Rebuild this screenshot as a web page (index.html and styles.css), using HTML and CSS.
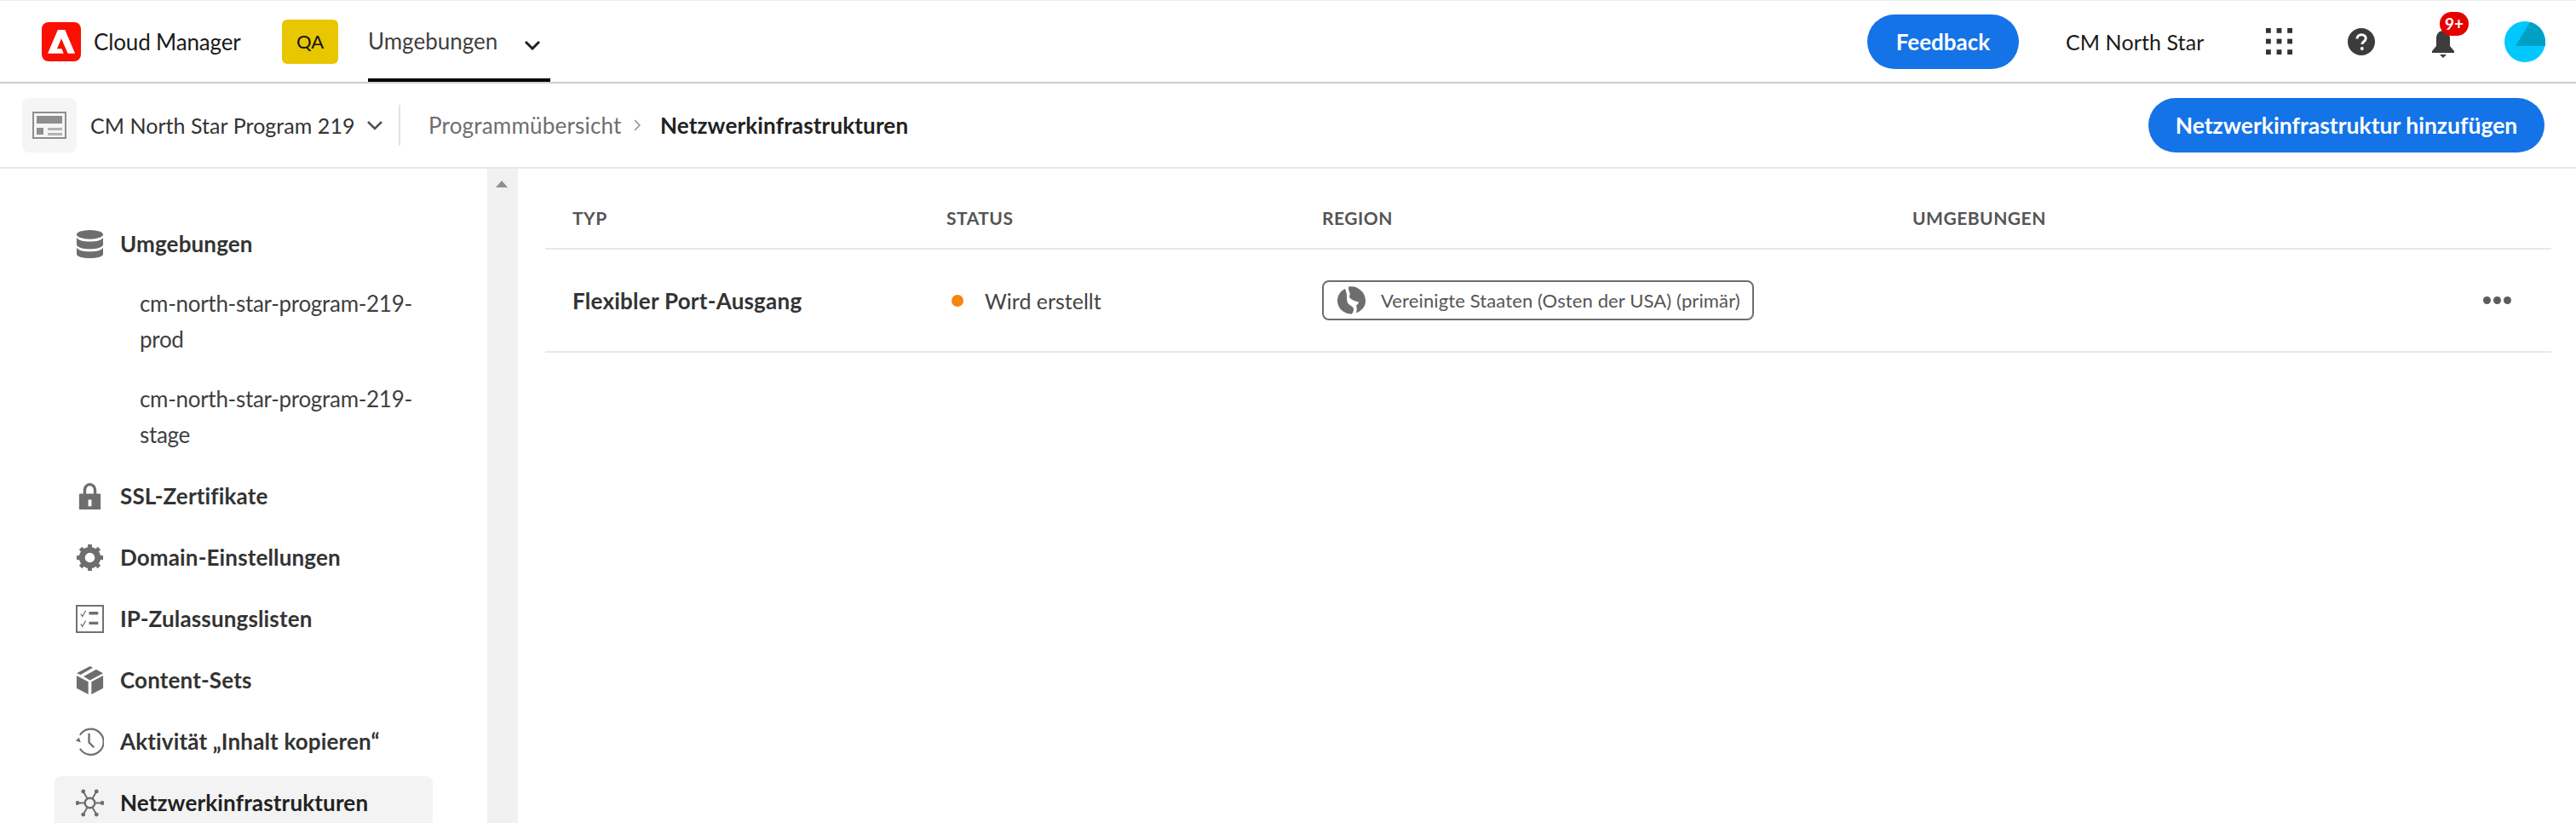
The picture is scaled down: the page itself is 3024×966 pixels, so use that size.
FILE: index.html
```html
<!DOCTYPE html>
<html lang="de">
<head>
    <meta charset="UTF-8">
    <title>Cloud Manager</title>
    <link rel="stylesheet" href="styles.css">
</head>
<body>
    <!-- Obere Leiste -->
    <header class="topbar">
        <svg class="logo" viewBox="0 0 46 46"><rect width="46" height="46" rx="8" fill="#fa0f00"/><path transform="translate(7 9) scale(1.07)" fill="#fff" d="M11.1 0H19L30 26H22.1L15 9.6 10.2 20.8H15.4L17.5 26H0z"/></svg>
        <span class="app-name">Cloud Manager</span>
        <span class="env-badge">QA</span>
        <div class="top-tab">
            <span>Umgebungen</span>
            <svg class="tab-chevron" viewBox="0 0 20 12"><path d="M2 2l8 8 8-8" fill="none" stroke="#222" stroke-width="3"/></svg>
        </div>
        <div class="top-right">
            <button class="btn btn-feedback">Feedback</button>
            <span class="org-name">CM North Star</span>
            <svg class="icon-apps" viewBox="0 0 32 32" fill="#333"><rect x="0" y="0" width="6" height="6"/><rect x="13" y="0" width="6" height="6"/><rect x="26" y="0" width="6" height="6"/><rect x="0" y="13" width="6" height="6"/><rect x="13" y="13" width="6" height="6"/><rect x="26" y="13" width="6" height="6"/><rect x="0" y="26" width="6" height="6"/><rect x="13" y="26" width="6" height="6"/><rect x="26" y="26" width="6" height="6"/></svg>
            <svg class="icon-help" viewBox="0 0 32 32"><circle cx="16" cy="16" r="16" fill="#3c3c3c"/><path d="M11 12.5c0-3 2.300-4.700 5.200-4.700 2.900 0 5 1.700 5 4.200 0 3.800-4.200 3.700-4.200 7" fill="none" stroke="#fff" stroke-width="3"/><circle cx="16.800" cy="24" r="2" fill="#fff"/></svg>
            <div class="bell">
                <svg class="icon-bell" viewBox="0 0 30 34" fill="#3c3c3c"><path d="M15 2c-5 0-8 4-8 9v9l-5 6v2h26v-2l-5-6v-9c0-5-3-9-8-9z"/><path d="M11 30h8l-4 4z"/></svg>
                <span class="bell-count">9+</span>
            </div>
            <svg class="avatar" viewBox="0 0 48 48"><circle cx="24" cy="24" r="24" fill="#00c8ff"/><path d="M30 1A24 24 0 0 1 48 24v5H13z" fill="#00a0c4"/></svg>
        </div>
    </header>

    <!-- Programmleiste -->
    <div class="subbar">
        <div class="program-tile">
            <svg viewBox="0 0 40 32" width="40" height="32"><rect x="1" y="1" width="38" height="30" fill="none" stroke="#8e8e8e" stroke-width="2"/><rect x="5" y="5" width="30" height="9" fill="#8e8e8e"/><rect x="5" y="19" width="8" height="8" fill="#8e8e8e"/><rect x="18" y="19" width="17" height="3" fill="#b3b3b3"/><rect x="18" y="25" width="17" height="3" fill="#b3b3b3"/></svg>
        </div>
        <span class="program-name">CM North Star Program 219</span>
        <svg class="program-chevron" viewBox="0 0 20 12"><path d="M2 2l8 8 8-8" fill="none" stroke="#505050" stroke-width="2.500"/></svg>
        <div class="subbar-divider"></div>
        <nav class="breadcrumb">
            <span class="crumb">Programmübersicht</span>
            <svg class="crumb-sep" viewBox="0 0 8 14"><path d="M1 1l6 6-6 6" fill="none" stroke="#8e8e8e" stroke-width="1.500"/></svg>
            <span class="crumb-current">Netzwerkinfrastrukturen</span>
        </nav>
        <button class="btn btn-add">Netzwerkinfrastruktur hinzufügen</button>
    </div>

    <div class="main">
        <!-- Seitenleiste -->
        <aside class="sidebar">
            <div class="nav-item">
                <svg class="nav-icon" viewBox="0 0 34 34" fill="#6e6e6e"><ellipse cx="17" cy="5.500" rx="16" ry="5.500"/><path d="M1 9c2 3.500 8 5 16 5s14-1.500 16-5v9c-2 3.500-8 5-16 5S3 21.500 1 18z"/><path d="M1 21c2 3.500 8 5 16 5s14-1.500 16-5v8c0 3-7 5-16 5S1 32 1 29z"/></svg>
                <span>Umgebungen</span>
            </div>
            <div class="sub-list">
                <div class="sub-item">cm-north-star-program-219-<br>prod</div>
                <div class="sub-item">cm-north-star-program-219-<br>stage</div>
            </div>
            <div class="nav-item">
                <svg class="nav-icon" viewBox="0 0 34 34" fill="#6e6e6e"><path d="M9 15V10c0-5 3.500-9 8-9s8 4 8 9v5h-3.500v-5c0-3.500-2-5.500-4.500-5.500S12.500 6.500 12.500 10v5z"/><path d="M5 14h24a1 1 0 0 1 1 1v18H4V15a1 1 0 0 1 1-1zm10 7v8h4v-8z" fill-rule="evenodd"/></svg>
                <span>SSL-Zertifikate</span>
            </div>
            <div class="nav-item">
                <svg class="nav-icon" viewBox="0 0 34 34"><circle cx="17" cy="17" r="9.500" fill="none" stroke="#6e6e6e" stroke-width="7"/><path d="M17 1v32M1 17h32M5.700 5.700l22.600 22.600M28.300 5.700L5.700 28.300" stroke="#6e6e6e" stroke-width="5" stroke-dasharray="6 20 6" fill="none"/></svg>
                <span>Domain-Einstellungen</span>
            </div>
            <div class="nav-item">
                <svg class="nav-icon" viewBox="0 0 34 34" fill="none" stroke="#6e6e6e"><rect x="1" y="1" width="32" height="32" stroke-width="2"/><path d="M6 11l2 3 4-7M6 23l2 3 4-7" stroke-width="1.300"/><path d="M16 10h11M16 22h11" stroke-width="3.500"/></svg>
                <span>IP-Zulassungslisten</span>
            </div>
            <div class="nav-item">
                <svg class="nav-icon" viewBox="0 0 34 36" fill="#6e6e6e"><path d="M0 9L17 0l4 2L5 11v0zM9 13L25 4l9 5-17 9z"/><path d="M0 12l15 8v16L0 28zM34 12v16l-15 8V20z"/></svg>
                <span>Content-Sets</span>
            </div>
            <div class="nav-item">
                <svg class="nav-icon" viewBox="0 0 34 34" fill="none" stroke="#6e6e6e" stroke-width="2.200"><path d="M5 9a15.500 15.500 0 1 1 0 16.500"/><path d="M16 7v11l6 6" stroke-width="2.400"/><path d="M0 16l4-4 2 6z" fill="#6e6e6e" stroke="none"/></svg>
                <span>Aktivität „Inhalt kopieren“</span>
            </div>
            <div class="nav-item nav-item-active">
                <svg class="nav-icon" viewBox="0 0 34 34" fill="#6e6e6e" stroke="#6e6e6e" stroke-width="2"><path d="M1.500 17h31M9 3l16 28M25 3L9 31"/><circle cx="17" cy="17" r="6" fill="#f3f3f3" stroke-width="2.500"/><circle cx="2" cy="17" r="1.500"/><circle cx="32" cy="17" r="1.500"/><circle cx="9" cy="3" r="1.500"/><circle cx="25" cy="3" r="1.500"/><circle cx="9" cy="31" r="1.500"/><circle cx="25" cy="31" r="1.500"/></svg>
                <span>Netzwerkinfrastrukturen</span>
            </div>
        </aside>

        <div class="scrollbar"><div class="scroll-arrow"></div></div>

        <!-- Tabelle -->
        <section class="content">
            <div class="table-row table-head">
                <div>TYP</div>
                <div>STATUS</div>
                <div>REGION</div>
                <div>UMGEBUNGEN</div>
            </div>
            <div class="table-row table-body">
                <div class="cell-type">Flexibler Port-Ausgang</div>
                <div class="cell-status"><span class="status-dot"></span>Wird erstellt</div>
                <div>
                    <span class="region-tag">
                        <svg class="globe" viewBox="0 0 33 33" fill="#6e6e6e"><path d="M9 3C3 6 0 11 0 17c0 7 5 13 12 15 2 .5 4 .5 5 .5 2-3 3-6 1-8-2-2-5-3-6-5-1-3-1-5-1-8 0-3-1-6-2-8.500z"/><path d="M13 .500c5-1 10 0 14 4 4 3 6 8 6 13 0 6-4 11-11 14 1-4 1-7 0-9 1-1 3-2 3-4-2-1-5-1-8-3-2-1-3-2-3-4 1-2 1-3 0-5-1-2-1-4-1-6z"/></svg>
                        Vereinigte Staaten (Osten der USA) (primär)
                    </span>
                </div>
                <div class="cell-actions"><span class="more"><i></i><i></i><i></i></span></div>
            </div>
        </section>
    </div>
</body>
</html>
```

FILE: styles.css
```css
* {
    box-sizing: border-box;
}
html, body {
    margin: 0;
    height: 966px;
    overflow: hidden;
}
body {
    font-family: Lato, "Open Sans", sans-serif;
    font-size: 26px;
    background-color: #fff;
    color: #2c2c2c;
    display: flex;
    flex-direction: column;
}
svg {
    display: block;
    flex-shrink: 0;
}

/* Obere Leiste */
.topbar {
    height: 98px;
    flex-shrink: 0;
    display: flex;
    align-items: center;
    padding-left: 49px;
    border-top: 1px solid #eee;
    border-bottom: 2px solid #cfcfcf;
}
.logo {
    width: 46px;
    height: 46px;
}
.app-name {
    margin-left: 15px;
    width: 220px;
    font-size: 26px;
    letter-spacing: -0.15px;
    color: #1a1a1a;
}
.env-badge {
    width: 66px;
    height: 52px;
    margin-left: 1px;
    background-color: #e8c600;
    border-radius: 6px;
    display: flex;
    align-items: center;
    justify-content: center;
    font-size: 22px;
    color: #111;
}
.top-tab {
    margin-left: 35px;
    width: 214px;
    height: 95px;
    border-bottom: 4px solid #000;
    display: flex;
    align-items: center;
    padding-top: 3px;
    color: #3f3f3f;
}
.tab-chevron {
    width: 20px;
    height: 12px;
    margin-left: 31px;
    margin-top: 10px;
}
.top-right {
    margin-left: auto;
    display: flex;
    align-items: center;
}
.btn {
    height: 64px;
    border: none;
    border-radius: 32px;
    background-color: #1473e6;
    color: #fff;
    font-family: Lato, "Open Sans", sans-serif;
    font-size: 26px;
    font-weight: 700;
    cursor: pointer;
}
.btn-feedback {
    width: 178px;
}
.org-name {
    margin-left: 55px;
    width: 235px;
    font-size: 25px;
    letter-spacing: 0.1px;
    color: #1a1a1a;
}
.icon-apps {
    width: 31px;
    height: 31px;
}
.icon-help {
    width: 32px;
    height: 32px;
    margin-left: 65px;
}
.bell {
    position: relative;
    margin-left: 65px;
}
.icon-bell {
    width: 30px;
    height: 34px;
    margin-top: 4px;
}
.bell-count {
    position: absolute;
    left: 11px;
    top: -16px;
    width: 34px;
    height: 28px;
    border-radius: 14px;
    background-color: #e60000;
    color: #fff;
    font-size: 19px;
    font-weight: 700;
    text-align: center;
    line-height: 28px;
}
.avatar {
    width: 48px;
    height: 48px;
    margin-left: 57px;
    margin-right: 36px;
}

/* Programmleiste */
.subbar {
    height: 100px;
    flex-shrink: 0;
    display: flex;
    align-items: center;
    padding-left: 26px;
    border-bottom: 2px solid #e8e8e8;
}
.program-tile {
    width: 64px;
    height: 64px;
    background-color: #f5f5f5;
    border-radius: 8px;
    display: flex;
    align-items: center;
    justify-content: center;
}
.program-name {
    margin-left: 16px;
    width: 324px;
    font-size: 25px;
    letter-spacing: 0.05px;
    color: #333;
    white-space: nowrap;
}
.program-chevron {
    width: 20px;
    height: 12px;
}
.subbar-divider {
    width: 2px;
    height: 48px;
    margin-left: 18px;
    background-color: #e3e3e3;
}
.breadcrumb {
    margin-left: 33px;
    display: flex;
    align-items: center;
}
.crumb {
    width: 241px;
    letter-spacing: 0.2px;
    color: #6e6e6e;
    white-space: nowrap;
}
.crumb-sep {
    width: 8px;
    height: 14px;
}
.crumb-current {
    margin-left: 23px;
    font-weight: 700;
    letter-spacing: 0.15px;
    color: #222;
}
.btn-add {
    margin-left: auto;
    margin-right: 37px;
    width: 465px;
    font-size: 26.5px;
}

/* Seitenleiste */
.main {
    flex: 1;
    display: flex;
    min-height: 0;
}
.sidebar {
    width: 572px;
    flex-shrink: 0;
    padding: 57px 64px 0;
    display: flex;
    flex-direction: column;
    gap: 8px;
    overflow: hidden;
}
.nav-item {
    width: 444px;
    height: 64px;
    flex-shrink: 0;
    padding-left: 25px;
    padding-bottom: 2px;
    display: flex;
    align-items: center;
    gap: 19px;
    font-weight: 700;
    letter-spacing: 0.15px;
    color: #333;
    border-radius: 8px;
}
.nav-item-active {
    background-color: #f3f3f3;
    color: #222;
}
.nav-icon {
    width: 33px;
    height: 33px;
}
.sub-list {
    margin: 8px 0 12px;
    padding-left: 100px;
    display: flex;
    flex-direction: column;
    gap: 28px;
    flex-shrink: 0;
}
.sub-item {
    line-height: 42px;
    letter-spacing: -0.3px;
    color: #3f3f3f;
    white-space: nowrap;
}
.scrollbar {
    width: 36px;
    flex-shrink: 0;
    background-color: #f1f1f1;
    padding: 14px 0 0 10px;
}
.scroll-arrow {
    width: 0;
    height: 0;
    border-left: 7px solid transparent;
    border-right: 7px solid transparent;
    border-bottom: 8px solid #8e8e8e;
}

/* Tabelle */
.content {
    width: 2355px;
    margin-left: 32px;
}
.table-row {
    display: grid;
    grid-template-columns: 439px 441px 693px 1fr;
    align-items: center;
    padding-left: 32px;
    border-bottom: 2px solid #e8e8e8;
}
.table-head {
    height: 95px;
    padding-top: 22px;
    font-size: 21px;
    font-weight: 700;
    color: #555;
    letter-spacing: 0.5px;
}
.table-body {
    height: 121px;
    position: relative;
}
.cell-type {
    font-weight: 700;
    letter-spacing: 0.25px;
    color: #333;
}
.cell-status {
    display: flex;
    align-items: center;
    padding-left: 6px;
    font-size: 25px;
    color: #444;
}
.status-dot {
    width: 14px;
    height: 14px;
    border-radius: 50%;
    background-color: #f68511;
    margin-right: 25px;
}
.region-tag {
    display: inline-flex;
    align-items: center;
    height: 47px;
    width: 507px;
    padding-left: 16px;
    gap: 18px;
    border: 2px solid #6e6e6e;
    border-radius: 8px;
    font-size: 22px;
    letter-spacing: 0.12px;
    color: #555;
    white-space: nowrap;
}
.globe {
    width: 33px;
    height: 33px;
}
.cell-actions {
    position: absolute;
    right: 47px;
    top: 0;
    bottom: 0;
    display: flex;
    align-items: center;
}
.more {
    display: flex;
    gap: 3px;
}
.more i {
    display: block;
    width: 9px;
    height: 9px;
    border-radius: 50%;
    background-color: #5c5c5c;
}
```
